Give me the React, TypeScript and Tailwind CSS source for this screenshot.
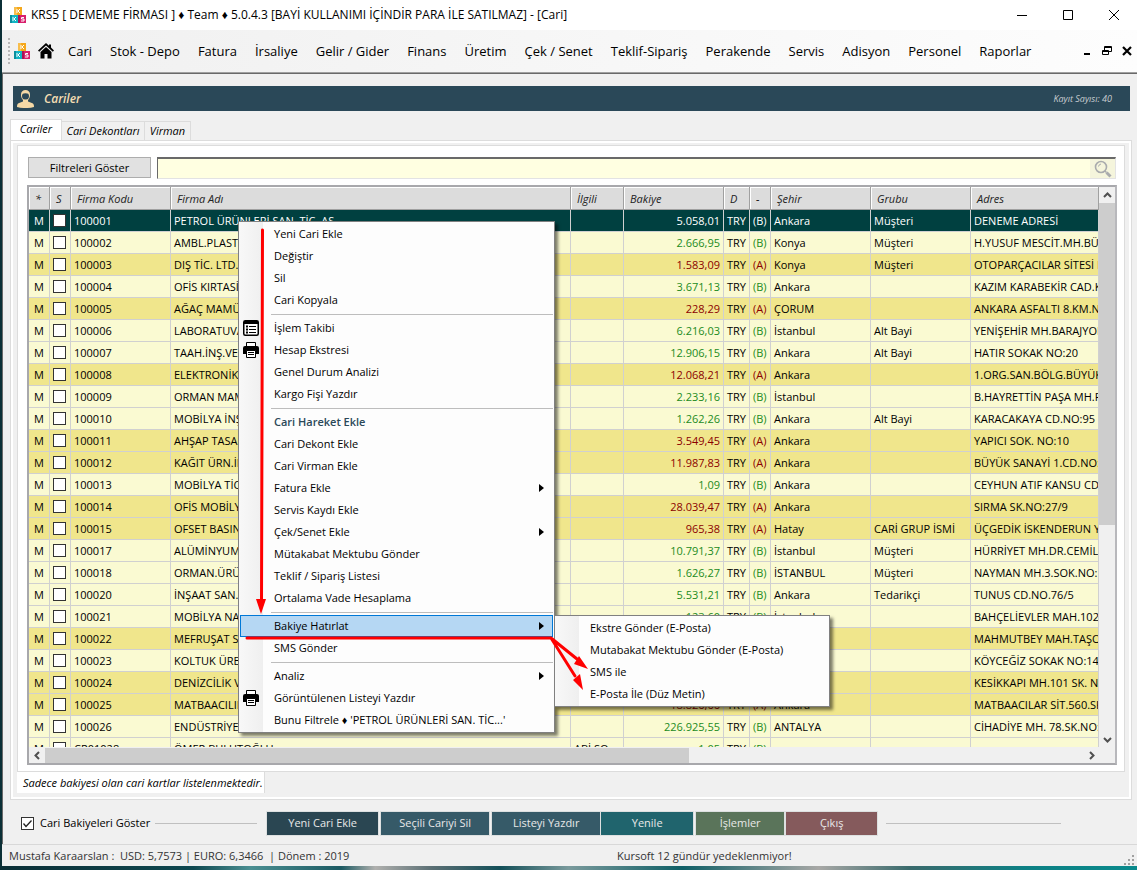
import React from 'react';
import { clsx } from 'clsx';

interface Customer {
  code: string;
  name: string;
  contact?: string;
  balance: string;
  side: 'A' | 'B';
  city: string;
  group?: string;
  address: string;
}

const customers: Customer[] = [
  { code: '100001', name: 'PETROL ÜRÜNLERİ SAN. TİC. AŞ.', balance: '5.058,01', side: 'B', city: 'Ankara', group: 'Müşteri', address: 'DENEME ADRESİ' },
  { code: '100002', name: 'AMBL.PLASTİK', balance: '2.666,95', side: 'B', city: 'Konya', group: 'Müşteri', address: 'H.YUSUF MESCİT.MH.BÜYÜK' },
  { code: '100003', name: 'DIŞ TİC. LTD. ŞTİ.', balance: '1.583,09', side: 'A', city: 'Konya', group: 'Müşteri', address: 'OTOPARÇACILAR SİTESİ B BLOK' },
  { code: '100004', name: 'OFİS KIRTASİYE', balance: '3.671,13', side: 'B', city: 'Ankara', address: 'KAZIM KARABEKİR CAD.KAT' },
  { code: '100005', name: 'AĞAÇ MAMÜLLERİ', balance: '228,29', side: 'A', city: 'ÇORUM', address: 'ANKARA ASFALTI 8.KM.NO:5' },
  { code: '100006', name: 'LABORATUVAR', balance: '6.216,03', side: 'B', city: 'İstanbul', group: 'Alt Bayi', address: 'YENİŞEHİR MH.BARAJYOLU' },
  { code: '100007', name: 'TAAH.İNŞ.VE TİC.', balance: '12.906,15', side: 'B', city: 'Ankara', group: 'Alt Bayi', address: 'HATIR SOKAK NO:20' },
  { code: '100008', name: 'ELEKTRONİK', balance: '12.068,21', side: 'A', city: 'Ankara', address: '1.ORG.SAN.BÖLG.BÜYÜKTUR' },
  { code: '100009', name: 'ORMAN MAMÜLLERİ', balance: '2.233,16', side: 'B', city: 'İstanbul', address: 'B.HAYRETTİN PAŞA MH.POLAT' },
  { code: '100010', name: 'MOBİLYA İNŞAAT', balance: '1.262,26', side: 'B', city: 'Ankara', group: 'Alt Bayi', address: 'KARACAKAYA CD.NO:95' },
  { code: '100011', name: 'AHŞAP TASARIM', balance: '3.549,45', side: 'A', city: 'Ankara', address: 'YAPICI SOK. NO:10' },
  { code: '100012', name: 'KAĞIT ÜRN.İML.', balance: '11.987,83', side: 'A', city: 'Ankara', address: 'BÜYÜK SANAYİ 1.CD.NO:85' },
  { code: '100013', name: 'MOBİLYA TİC.', balance: '1,09', side: 'B', city: 'Ankara', address: 'CEYHUN ATIF KANSU CD.NO' },
  { code: '100014', name: 'OFİS MOBİLYA', balance: '28.039,47', side: 'A', city: 'Ankara', address: 'SIRMA SK.NO:27/9' },
  { code: '100015', name: 'OFSET BASIN', balance: '965,38', side: 'A', city: 'Hatay', group: 'CARİ GRUP İSMİ', address: 'ÜÇGEDİK İSKENDERUN YOLU' },
  { code: '100017', name: 'ALÜMİNYUM', balance: '10.791,37', side: 'B', city: 'İstanbul', group: 'Müşteri', address: 'HÜRRİYET MH.DR.CEMİL BEY' },
  { code: '100018', name: 'ORMAN.ÜRÜNLERİ', balance: '1.626,27', side: 'B', city: 'İSTANBUL', group: 'Müşteri', address: 'NAYMAN MH.3.SOK.NO:12' },
  { code: '100020', name: 'İNŞAAT SAN.TİC.', balance: '5.531,21', side: 'B', city: 'Ankara', group: 'Tedarikçi', address: 'TUNUS CD.NO.76/5' },
  { code: '100021', name: 'MOBİLYA NAK.', balance: '123,60', side: 'B', city: 'İstanbul', address: 'BAHÇELİEVLER MAH.102 SOK' },
  { code: '100022', name: 'MEFRUŞAT SAN.', balance: '4.310,20', side: 'A', city: 'İstanbul', address: 'MAHMUTBEY MAH.TAŞOCAĞI' },
  { code: '100023', name: 'KOLTUK ÜRETİM', balance: '2.450,75', side: 'B', city: 'Ankara', address: 'KÖYCEĞİZ SOKAK NO:14/2' },
  { code: '100024', name: 'DENİZCİLİK VE TİC.', balance: '7.205,40', side: 'A', city: 'İzmir', address: 'KESİKKAPI MH.101 SK. NO:4' },
  { code: '100025', name: 'MATBAACILIK', balance: '18.826,66', side: 'A', city: 'Ankara', address: 'MATBAACILAR SİT.560.SK.' },
  { code: '100026', name: 'ENDÜSTRİYEL', balance: '226.925,55', side: 'B', city: 'ANTALYA', address: 'CİHADİYE MH. 78.SK.NO:26' },
  { code: 'CR01028', name: 'ÖMER BULUTOĞLU', contact: 'ABİ SO', balance: '1,05', side: 'B', city: '', address: '' },
];

const columns = [
  { label: '*', width: 'w-[21px]' },
  { label: 'S', width: 'w-[21px]' },
  { label: 'Firma Kodu', width: 'w-[100px]' },
  { label: 'Firma Adı', width: 'w-[400px]' },
  { label: 'İlgili', width: 'w-[53px]' },
  { label: 'Bakiye', width: 'w-[100px]' },
  { label: 'D', width: 'w-[26px]' },
  { label: '-', width: 'w-[21px]' },
  { label: 'Şehir', width: 'w-[100px]' },
  { label: 'Grubu', width: 'w-[100px]' },
  { label: 'Adres', width: 'w-auto' },
];

const menus = [
  'Cari', 'Stok - Depo', 'Fatura', 'İrsaliye', 'Gelir / Gider', 'Finans', 'Üretim', 'Çek / Senet',
  'Teklif-Sipariş', 'Perakende', 'Servis', 'Adisyon', 'Personel', 'Raporlar',
];

interface MenuEntry {
  label: string;
  icon?: 'list' | 'printer';
  submenu?: boolean;
  heading?: boolean;
  active?: boolean;
}

const contextGroups: MenuEntry[][] = [
  [{ label: 'Yeni Cari Ekle' }, { label: 'Değiştir' }, { label: 'Sil' }, { label: 'Cari Kopyala' }],
  [
    { label: 'İşlem Takibi', icon: 'list' },
    { label: 'Hesap Ekstresi', icon: 'printer' },
    { label: 'Genel Durum Analizi' },
    { label: 'Kargo Fişi Yazdır' },
  ],
  [
    { label: 'Cari Hareket Ekle', heading: true },
    { label: 'Cari Dekont Ekle' },
    { label: 'Cari Virman Ekle' },
    { label: 'Fatura Ekle', submenu: true },
    { label: 'Servis Kaydı Ekle' },
    { label: 'Çek/Senet Ekle', submenu: true },
    { label: 'Mütakabat Mektubu Gönder' },
    { label: 'Teklif / Sipariş Listesi' },
    { label: 'Ortalama Vade Hesaplama' },
  ],
  [{ label: 'Bakiye Hatırlat', submenu: true, active: true }, { label: 'SMS Gönder' }],
  [
    { label: 'Analiz', submenu: true },
    { label: 'Görüntülenen Listeyi Yazdır', icon: 'printer' },
    { label: "Bunu Filtrele ♦ 'PETROL ÜRÜNLERİ SAN. TİC...'" },
  ],
];

const reminderItems = ['Ekstre Gönder (E-Posta)', 'Mutabakat Mektubu Gönder (E-Posta)', 'SMS ile', 'E-Posta İle (Düz Metin)'];

const Logo: React.FC = () => (
  <svg width="16" height="16" viewBox="0 0 16 16" aria-hidden="true">
    <rect x="4" width="8" height="8" fill="#f5a81c" />
    <path d="M4 0h3v8H4z" fill="#f7bd4c" />
    <rect y="8" width="8" height="8" fill="#12b5c4" />
    <path d="M0 8h2v8H0z" fill="#0a8f9d" />
    <rect x="8" y="8" width="8" height="8" fill="#d81f6c" />
    <path d="M8 8h2v8H8z" fill="#a91456" />
    <path d="M7 2v4M10 2L8 4l2 2" stroke="#fff" fill="none" />
    <path d="M3 10v4M6 10l-2 2 2 2" stroke="#fff" fill="none" />
    <path d="M14 10.500h-2.500v1.500H14v2h-3" stroke="#fff" fill="none" />
  </svg>
);

const HomeIcon: React.FC = () => (
  <svg width="16" height="16" viewBox="0 0 16 16" aria-hidden="true">
    <path d="M8 0L0 7.400l1.200 1.300L8 2.500l6.800 6.200L16 7.400l-3-2.800V1.500h-2v1.200z" />
    <path d="M8 4L2.500 9v6.500h4V11h3v4.500h4V9z" />
  </svg>
);

const PersonIcon: React.FC = () => (
  <svg width="17" height="18" viewBox="0 0 17 18" aria-hidden="true">
    <path d="M4 4.500C4 1.500 6 0 8.500 0S13 1.500 13 4.500c0 4-2 6.500-4.500 6.500S4 8.500 4 4.500z" fill="#f5d9a6" />
    <path d="M5 6c0-2 1-2.700 3.500-2.700S12 4 12 6c0 2.500-1.500 4-3.500 4S5 8.500 5 6z" fill="#2a4858" />
    <path d="M6 9.500h5v2l4.500 1.800c1 .5 1.500 1.700 1.500 3.700-5 1.400-12 1.400-17 0 0-2 .5-3.200 1.500-3.700L6 11.500z" fill="#f5d9a6" />
  </svg>
);

const ListIcon: React.FC = () => (
  <svg width="16" height="16" viewBox="0 0 16 16" aria-hidden="true">
    <rect x="0.750" y="0.750" width="14.500" height="14.500" rx="1.500" fill="#fff" stroke="#000" strokeWidth="1.500" />
    <path d="M1 1h14v3H1zM3 5.500h2v2H3zM3 8.500h2v2H3zM3 11.500h2v2H3zM6 6h7v1H6zM6 9h7v1H6zM6 12h7v1H6z" />
  </svg>
);

const PrinterIcon: React.FC = () => (
  <svg width="16" height="16" viewBox="0 0 16 16" aria-hidden="true">
    <path d="M3.500 5V.500h9V5" fill="#fff" stroke="#000" />
    <path d="M2 4h12a2 2 0 012 2v6h-3V9H3v3H0V6a2 2 0 012-2z" />
    <path d="M3.500 8.500h9v7h-9z" fill="#fff" stroke="#000" />
    <path d="M5 10.500h6M5 12.500h6" stroke="#000" />
  </svg>
);

const SearchIcon: React.FC = () => (
  <svg width="18" height="18" viewBox="0 0 18 18" fill="none" stroke="#a9abad" aria-hidden="true">
    <circle cx="7" cy="7" r="5.500" strokeWidth="1.600" />
    <path d="M4.500 6.500A3 3 0 017 4" />
    <path d="M11 11l1.500 1.500" strokeWidth="1.500" />
    <path d="M12.500 12.500l4 4" strokeWidth="3" />
  </svg>
);

const Chevron: React.FC<{ d: string }> = ({ d }) => (
  <svg width="9" height="9" viewBox="0 0 9 9" fill="none" stroke="#505050" strokeWidth="2" aria-hidden="true">
    <path d={d} />
  </svg>
);

const TitleBar: React.FC = () => (
  <header className="flex h-[30px] shrink-0 items-center bg-white pl-2">
    <Logo />
    <h1 className="ml-[5px] flex-1 text-[12px]">
      KRS5 [ DEMEME FİRMASI ] ♦ Team ♦ 5.0.4.3 [BAYİ KULLANIMI İÇİNDİR PARA İLE SATILMAZ] - [Cari]
    </h1>
    <button aria-label="Simge durumuna küçült" className="flex w-[46px] justify-center">
      <svg width="10" height="10" stroke="#000"><path d="M0 5.500h10" /></svg>
    </button>
    <button aria-label="Ekranı kapla" className="flex w-[46px] justify-center">
      <svg width="10" height="10" stroke="#000" fill="none"><path d="M.500.500h9v9h-9z" /></svg>
    </button>
    <button aria-label="Kapat" className="flex w-[46px] justify-center">
      <svg width="10" height="10" stroke="#000"><path d="M0 0l10 10M10 0L0 10" /></svg>
    </button>
  </header>
);

const MenuBar: React.FC = () => (
  <nav className="flex h-[43px] shrink-0 items-center border-b border-[#a0a0a0] bg-linear-to-r from-[#f0f0f0] to-[#fdfdfd] pl-[6px]">
    <span className="h-[26px] border-l-2 border-dotted border-[#b8b8b8]" />
    <span className="ml-1"><Logo /></span>
    <button aria-label="Ana sayfa" className="ml-2"><HomeIcon /></button>
    <div className="ml-[5px] flex flex-1 pt-px">
      {menus.map((menu) => (
        <button key={menu} className="px-[9px] text-[13px] whitespace-nowrap">{menu}</button>
      ))}
    </div>
    <button aria-label="Küçült" className="px-1">
      <svg width="12" height="12"><path d="M3 8h6v2H3z" /></svg>
    </button>
    <button aria-label="Önceki boyut" className="px-1">
      <svg width="12" height="12" stroke="#000" fill="none">
        <path d="M3.500 5V1.500h7v5H8M3 2.500h8M1.500 5.500h6v4h-6zM1 6.500h7" />
      </svg>
    </button>
    <button aria-label="Pencereyi kapat" className="px-1">
      <svg width="12" height="12" stroke="#000" strokeWidth="2.200"><path d="M2 2l8 8M10 2l-8 8" /></svg>
    </button>
  </nav>
);

const CustomerRow: React.FC<{ customer: Customer; index: number }> = ({ customer, index }) => {
  const selected = index === 0;
  const debtor = customer.side === 'A';
  const amountColor = selected ? 'text-white' : debtor ? 'text-[#8b0000]' : 'text-[#228b22]';
  const cell = 'truncate border-r border-b border-[#d0d0d0] px-[3px] text-clip';

  return (
    <tr className={clsx('h-[22px]', selected ? 'bg-[#004040] text-white' : debtor ? 'bg-[#f0e68c]' : 'bg-[#fafad2]')}>
      <td className={clsx(cell, 'text-center')}>M</td>
      <td className={cell}>
        <input
          type="checkbox"
          aria-label={`${customer.code} seç`}
          className="block size-[13px] appearance-none border border-[#333] bg-white"
        />
      </td>
      <td className={cell}>{customer.code}</td>
      <td className={cell}>{customer.name}</td>
      <td className={cell}>{customer.contact}</td>
      <td className={clsx(cell, 'text-right', amountColor)}>{customer.balance}</td>
      <td className={cell}>TRY</td>
      <td className={clsx(cell, amountColor)}>({customer.side})</td>
      <td className={cell}>{customer.city}</td>
      <td className={cell}>{customer.group}</td>
      <td className={cell}>{customer.address}</td>
    </tr>
  );
};

const CustomerGrid: React.FC = () => (
  <div className="mt-[6px] mr-[7px] mb-[6px] ml-[9px] flex min-h-0 flex-1 flex-col border-2 border-[#a8a8ac] border-r-[#b8b8bc] bg-[#f0f0f0]">
    <div className="flex min-h-0 flex-1">
      <div className="min-w-0 flex-1 overflow-hidden">
        <table className="w-full table-fixed border-separate border-spacing-0 text-[11px] leading-[16px] whitespace-nowrap">
          <thead>
            <tr className="h-[23px] bg-[#dcdcdc]">
              {columns.map((column) => (
                <th
                  key={column.label}
                  className={clsx(column.width, 'border-r border-b border-[#a0a0a0] px-[6px] pt-[2px] text-left font-normal text-[#222] italic shadow-[inset_1px_1px_0_#fff]')}
                >
                  {column.label}
                </th>
              ))}
            </tr>
          </thead>
          <tbody>
            {customers.map((customer, index) => (
              <CustomerRow key={customer.code} customer={customer} index={index} />
            ))}
          </tbody>
        </table>
      </div>
      <div className="flex w-4 shrink-0 flex-col items-center">
        <button aria-label="Yukarı kaydır" className="flex h-4 items-center"><Chevron d="M1 6l3.500-3.500L8 6" /></button>
        <div className="w-full flex-1"><div className="h-[61%] bg-[#cdcdcd]" /></div>
        <button aria-label="Aşağı kaydır" className="flex h-4 items-center"><Chevron d="M1 3l3.500 3.500L8 3" /></button>
      </div>
    </div>
    <div className="flex h-4 shrink-0 items-center pr-4">
      <button aria-label="Sola kaydır" className="flex w-4 justify-center"><Chevron d="M6 1L2.500 4.500 6 8" /></button>
      <div className="h-[15px] flex-1"><div className="h-full w-[62%] bg-[#cdcdcd]" /></div>
      <button aria-label="Sağa kaydır" className="flex w-4 justify-center"><Chevron d="M3 1l3.500 3.500L3 8" /></button>
    </div>
  </div>
);

const actions = [
  { label: 'Yeni Cari Ekle', style: 'w-[113px] bg-[#2a4652] mr-px' },
  { label: 'Seçili Cariyi Sil', style: 'w-[110px] bg-[#365a68] mr-px' },
  { label: 'Listeyi Yazdır', style: 'w-[110px] bg-[#365a68] -mr-px' },
  { label: 'Yenile', style: 'w-[94px] bg-[#20646d] mr-px' },
  { label: 'İşlemler', style: 'w-[90px] bg-[#5a745a]' },
  { label: 'Çıkış', style: 'w-[93px] bg-[#855a5c]' },
];

const ActionBar: React.FC = () => (
  <div className="flex h-[44px] shrink-0 items-center pt-[2px] pl-[18px] text-[11px]">
    <label className="flex items-center gap-[6px]">
      <input type="checkbox" defaultChecked className="peer sr-only" />
      <span className="flex size-[13px] items-center justify-center border border-[#333] bg-white">
        <svg width="11" height="11" fill="none" stroke="#222" strokeWidth="1.300"><path d="M1.500 5.500l2.500 3 5.500-6" /></svg>
      </span>
      Cari Bakiyeleri Göster
    </label>
    <span className="mr-[9px] ml-[5px] w-[102px] border-t border-[#c0c0c0]" />
    {actions.map((action) => (
      <button key={action.label} className={clsx(action.style, 'h-[25px] border border-[#dde0e0] text-[#e8e8e8]')}>
        {action.label}
      </button>
    ))}
    <span className="mr-[76px] ml-2 flex-1 border-t border-[#c0c0c0]" />
  </div>
);

const menuIcons = { list: <ListIcon />, printer: <PrinterIcon /> };

const ContextMenu: React.FC = () => (
  <ul className="absolute top-[221px] left-[238px] w-[317px] border border-[#808080] bg-linear-to-r from-[#f8f8f8] from-0% via-[#efefef] via-[24px] to-[#fdfdfd] to-[24px] py-px text-[11px] shadow-[3px_3px_3px_rgba(0,0,0,0.5)]">
    {contextGroups.map((group, groupIndex) => (
      <React.Fragment key={groupIndex}>
        {groupIndex > 0 && <li role="separator" className="my-[2px] mr-px ml-8 h-[2px] border-b border-[#bdbdbd]" />}
        {group.map((item) => (
          <li key={item.label}>
            <button
              className={clsx(
                'mx-px flex h-[22px] w-[313px] items-center border text-left',
                item.active ? 'border-[#0078d7] bg-[#b5d7f3]' : 'border-transparent',
                item.heading && 'font-semibold text-[#2a4858]',
              )}
            >
              <span className="w-[33px] pl-[2px]">{item.icon && menuIcons[item.icon]}</span>
              <span className="flex-1 whitespace-nowrap">{item.label}</span>
              {item.submenu && <svg width="5" height="8" className="mr-2"><path d="M0 0l5 4-5 4z" /></svg>}
            </button>
          </li>
        ))}
      </React.Fragment>
    ))}
  </ul>
);

const ReminderMenu: React.FC = () => (
  <ul className="absolute top-[615px] left-[554px] w-[276px] border border-[#808080] bg-linear-to-r from-[#f8f8f8] from-0% via-[#efefef] via-[24px] to-[#fdfdfd] to-[24px] py-px text-[11px] shadow-[3px_3px_3px_rgba(0,0,0,0.5)]">
    {reminderItems.map((item) => (
      <li key={item}>
        <button className="h-[22px] w-full pl-[35px] text-left whitespace-nowrap">{item}</button>
      </li>
    ))}
  </ul>
);

const Arrows: React.FC = () => (
  <svg className="pointer-events-none absolute top-0 left-0" width="850" height="760" stroke="#f00" strokeWidth="3" fill="none" aria-hidden="true">
    <path d="M262.500 230L261.500 602M247 638h304M551 638l26 21M551 638l24 38" strokeLinecap="round" />
    <path d="M256 599h10l-5 15zM588 669l-14-5 5-8zM583 690l-10-10 7-6z" fill="#f00" stroke="none" />
  </svg>
);

const App: React.FC = () => (
  <div className="relative flex h-screen flex-col overflow-hidden bg-[linear-gradient(90deg,#0b2f36_0%,#0f4850_17%,#4b8f92_22%,#1c5a62_30%,#b0b0ae_33%,#5b6f74_38%,#134f58_44%,#7a9a9c_50%,#0f5f66_60%,#a8a8a6_72%,#3a6a6c_80%,#0d8084_90%,#0a8a8c_100%)] pb-[4px] pl-[2px] font-['Open_Sans','Noto_Sans',sans-serif] text-black">
    <TitleBar />
    <MenuBar />
    <main className="flex min-h-0 flex-1 flex-col border-t border-l border-[#696969] bg-[#f0f0f0]">
      <div className="mt-3 mr-[7px] ml-[10px] flex h-[25px] shrink-0 items-center bg-[#2a4858] pl-1">
        <PersonIcon />
        <h2 className="ml-[10px] flex-1 text-[12px] font-semibold text-[#f5deb3] italic">Cariler</h2>
        <span className="mr-[18px] text-[9px] text-[#c8ccd0] italic">Kayıt Sayısı: 40</span>
      </div>
      <div role="tablist" className="mt-2 ml-[7px] flex h-[21px] shrink-0 items-end text-[11px] italic">
        <button role="tab" aria-selected="true" className="h-[21px] w-[52px] border border-b-0 border-[#dcdcdc] bg-white pb-[2px]">Cariler</button>
        <button role="tab" className="h-[19px] w-[83px] border-t border-r border-[#dcdcdc]">Cari Dekontları</button>
        <button role="tab" className="h-[19px] w-[46px] border-t border-r border-[#dcdcdc]">Virman</button>
      </div>
      <div className="mr-[5px] ml-[7px] flex min-h-0 flex-1 flex-col border border-[#dcdcdc] bg-white p-[2px]">
        <div className="flex min-h-0 flex-1 flex-col bg-[#f0f0f0] px-[4px] pt-[2px] pb-[4px]">
          <div className="flex min-h-0 flex-1 flex-col border border-[#dcdcdc] bg-white">
            <div className="mt-[11px] mr-2 ml-[10px] flex h-[22px] shrink-0 gap-[6px]">
              <button className="h-[21px] w-[123px] border border-[#adadad] bg-[#e1e1e1] text-[11px] leading-[16px]">Filtreleri Göster</button>
              <div className="flex flex-1 border border-t-2 border-[#e3e3e3] border-t-[#696969] border-l-[#696969] bg-[#ffffe1]">
                <input aria-label="Ara" className="min-w-0 flex-1 outline-none" />
                <button aria-label="Bul" className="flex w-[25px] items-center justify-center bg-[#f5f5dc]"><SearchIcon /></button>
              </div>
            </div>
            <CustomerGrid />
          </div>
          <p className="h-[21px] w-[248px] shrink-0 border-r border-[#dcdcdc] bg-white pl-[6px] text-[11px] leading-[22px] whitespace-nowrap italic">
            Sadece bakiyesi olan cari kartlar listelenmektedir.
          </p>
        </div>
      </div>
      <ActionBar />
    </main>
    <footer className="flex h-[22px] shrink-0 items-center border-t border-[#d8d8d8] bg-[#f0f0f0] pt-[2px] pr-[2px] pl-[7px] text-[11px] text-[#333]">
      <span className="w-[111px]">Mustafa Karaarslan :</span>
      <span className="w-[149px]">USD: 5,7573 | EURO: 6,3466</span>
      <span className="w-[348px]">| Dönem : 2019</span>
      <span className="flex-1">Kursoft 12 gündür yedeklenmiyor!</span>
      <svg width="11" height="11" fill="#a0a0a0" className="mt-2" aria-hidden="true">
        <path d="M8 0h2v2H8zM4 4h2v2H4zM8 4h2v2H8zM0 8h2v2H0zM4 8h2v2H4zM8 8h2v2H8z" />
      </svg>
    </footer>
    <ContextMenu />
    <ReminderMenu />
    <Arrows />
  </div>
);

export default App;
